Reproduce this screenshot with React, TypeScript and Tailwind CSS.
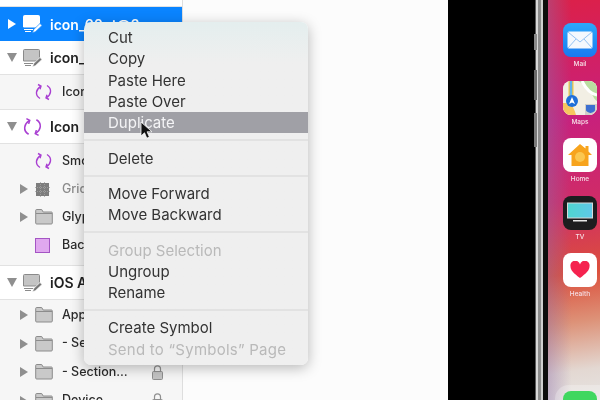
import React from 'react';

const FONT = "font-['Inter','Liberation_Sans',sans-serif]";

// Artboard icon with the small pencil
function ArtboardIcon({ light }: { light?: boolean }) {
  const fill = light ? '#ffffff' : '#c4c4c4';
  const stroke = light ? '#ffffff' : '#8a8a8a';
  return (
    <svg width="20" height="20" viewBox="0 0 20 20" className="shrink-0">
      <path d="M1.500 1.500h14a1 1 0 0 1 1 1V13H.500V2.500a1 1 0 0 1 1-1z" fill={fill} stroke={stroke} />
      <path d="M1 15.500h9M2 17.500h6" stroke={stroke} strokeWidth="1" fill="none" />
      <path d="M9.500 19l1.200-3.500 6.300-6 2 2-6.300 6z" fill={light ? '#ffffff' : '#777777'} stroke={light ? '#1a8cff' : '#ffffff'} strokeWidth="0.700" />
    </svg>
  );
}

function SyncIcon({ size = 17 }: { size?: number }) {
  return (
    <svg width={size} height={size + 1} viewBox="0 0 17 18" fill="none" stroke="#a93fd2" strokeWidth="1.400" className="shrink-0">
      <path d="M5 15.500C2.500 14 1.200 11.800 1.500 9.200 1.800 6.800 3 5 5.500 3.300" />
      <path d="M3 1.500l3 1.500-1 3.200" />
      <path d="M12 2.500c2.500 1.500 3.800 3.700 3.500 6.300-.3 2.400-1.500 4.200-4 5.900" />
      <path d="M14 16.500l-3-1.500 1-3.200" />
    </svg>
  );
}

function FolderIcon() {
  return (
    <svg width="18" height="16" viewBox="0 0 18 16" className="shrink-0">
      <path d="M.700 3V1.500a1 1 0 0 1 1-1h5l1.500 2.500h8.300a1 1 0 0 1 .8 1V14a1 1 0 0 1-1 1H1.700a1 1 0 0 1-1-1z" fill="#c9c9c9" stroke="#8c8c8c" />
      <path d="M1 4.500h16" stroke="#8c8c8c" />
    </svg>
  );
}

function GridIcon() {
  return (
    <svg width="15" height="15" viewBox="0 0 15 15" className="shrink-0">
      <rect x="1" y="1" width="13" height="13" fill="#7d7d7d" />
      <path d="M5.500 0v15M9.500 0v15M0 5.500h15M0 9.500h15" stroke="#a5a5a5" strokeWidth="0.800" strokeDasharray="1 1" />
    </svg>
  );
}

function Lock() {
  return (
    <svg width="11" height="15" viewBox="0 0 11 15" className="shrink-0">
      <path d="M2.500 6.500V3.800a3 3 0 0 1 6 0v2.700" fill="none" stroke="#8f8f8f" strokeWidth="1.200" />
      <rect x="0.500" y="6.500" width="10" height="8" rx="1" fill="#c4c4c4" stroke="#8f8f8f" />
    </svg>
  );
}

function Caret({ open, white }: { open?: boolean; white?: boolean }) {
  const color = white ? 'border-l-white' : 'border-l-[#8f8f8f]';
  if (open) {
    return <div className="w-0 h-0 border-x-[5px] border-x-transparent border-t-[9px] border-t-[#8f8f8f]" />;
  }
  return <div className={`w-0 h-0 border-y-[5px] border-y-transparent border-l-[8px] ${color}`} />;
}

function Header({ icon, name, open = true }: { icon: React.ReactNode; name: string; open?: boolean }) {
  return (
    <div className="h-[34px] flex items-center pl-[7px] bg-white border-b border-[#e2e2e2]">
      <div className="w-[16px] flex justify-start">
        <Caret open={open} />
      </div>
      <div className="w-[27px] flex justify-start">{icon}</div>
      <span className="text-[14px] font-semibold text-[#222] whitespace-nowrap">{name}</span>
    </div>
  );
}

function Child({
  icon,
  name,
  caret,
  dim,
  lock,
  h = 'h-[28px]',
}: {
  icon: React.ReactNode;
  name: string;
  caret?: boolean;
  dim?: boolean;
  lock?: boolean;
  h?: string;
}) {
  return (
    <div className={`${h} flex items-center pl-[20px] pr-[19px]`}>
      <div className="w-[15px]">{caret && <Caret />}</div>
      <div className="w-[27px] flex justify-start">{icon}</div>
      <span className={`flex-1 text-[12.500px] font-medium whitespace-nowrap ${dim ? 'text-[#8b8b8b]' : 'text-[#2b2b2b]'}`}>{name}</span>
      {lock && <Lock />}
    </div>
  );
}

function Sidebar() {
  return (
    <div className="w-[183px] shrink-0 h-full border-r border-[#dedede] bg-[#f6f6f6] overflow-hidden">
      <div className="h-[7px] bg-white border-b border-[#e2e2e2]" />
      <div className="h-[34px] flex items-center pl-[8px] bg-[#0a84ff]">
        <div className="w-[15px]">
          <Caret white />
        </div>
        <div className="w-[27px] flex justify-start">
          <ArtboardIcon light />
        </div>
        <span className="text-[14px] font-semibold text-white whitespace-nowrap">icon_60pt@2x</span>
      </div>
      <Header icon={<ArtboardIcon />} name="icon_60pt" />
      <div className="border-b border-[#e2e2e2]">
        <Child icon={<SyncIcon />} name="Icon" h="h-[34px]" />
      </div>
      <Header icon={<SyncIcon size={19} />} name="Icon" />
      <div className="pt-[3px] pb-[6px] border-b border-[#e2e2e2]">
        <Child icon={<SyncIcon />} name="Smooth" />
        <Child caret icon={<GridIcon />} name="Grid" dim />
        <Child caret icon={<FolderIcon />} name="Glyphs" />
        <Child icon={<div className="w-[15px] h-[15px] bg-[#e0a8ef] border border-[#a455c4]" />} name="Background" />
      </div>
      <Header icon={<ArtboardIcon />} name="iOS App" />
      <div className="pt-[1px]">
        <Child caret icon={<FolderIcon />} name="App" h="h-[28.500px]" />
        <Child caret icon={<FolderIcon />} name="- Section" h="h-[28.500px]" />
        <Child caret icon={<FolderIcon />} name="- Section…" lock h="h-[28.500px]" />
        <Child caret icon={<FolderIcon />} name="Device" lock h="h-[28.500px]" />
      </div>
    </div>
  );
}

function Sep() {
  return (
    <div className="h-[14px] flex items-center">
      <div className="w-full h-[2px] bg-[#e2e2e2]" />
    </div>
  );
}

function Item({ label, disabled, active, wide }: { label: string; disabled?: boolean; active?: boolean; wide?: boolean }) {
  const color = disabled ? 'text-[#b9b9b9]' : active ? 'text-[#f4f4f6] bg-[#a0a0a6]' : 'text-[#333]';
  return (
    <div className={`h-[21.300px] flex items-center pl-[24px] text-[15px] leading-none whitespace-nowrap ${wide ? 'tracking-[0.24px]' : ''} ${color}`}>
      {label}
    </div>
  );
}

function ContextMenu() {
  return (
    <div className="absolute left-[84px] top-[22px] w-[224px] py-[5px] rounded-[7px] bg-gradient-to-b from-[#e4eeee] to-[#efefef] to-[12%] shadow-[0_3px_14px_rgba(0,0,0,0.28)]">
      <Item label="Cut" />
      <Item label="Copy" />
      <Item label="Paste Here" />
      <Item label="Paste Over" />
      <Item label="Duplicate" active />
      <Sep />
      <Item label="Delete" />
      <Sep />
      <Item label="Move Forward" />
      <Item label="Move Backward" />
      <Sep />
      <Item label="Group Selection" disabled />
      <Item label="Ungroup" />
      <Item label="Rename" />
      <Sep />
      <Item label="Create Symbol" />
      <Item label="Send to “Symbols” Page" disabled wide />
    </div>
  );
}

function Cursor() {
  return (
    <svg width="13" height="19" viewBox="0 0 13 19" className="absolute left-[140px] top-[121px]">
      <path d="M1 1v14l3.500-3.200 2.300 5.400 2.600-1.100-2.300-5.300H12z" fill="#111" stroke="#fff" strokeWidth="0.800" />
    </svg>
  );
}

function AppIcon({ label, className, children }: { label: string; className: string; children: React.ReactNode }) {
  return (
    <div className="flex flex-col items-center h-[57.500px]">
      <div className={`w-[34px] h-[34px] rounded-[8px] overflow-hidden flex items-center justify-center shrink-0 ${className}`}>{children}</div>
      <span className="mt-[3px] text-[6.500px] leading-[9px] font-medium text-[#f6dfe6]">{label}</span>
    </div>
  );
}

function Phone() {
  return (
    <div className="w-[152px] shrink-0 h-full bg-black flex justify-end relative">
      <div className="w-[13px] h-full flex">
        <div className="w-[1px] bg-[#5a5a5a]" />
        <div className="w-[2px] bg-[#d8d8d8]" />
        <div className="w-[3px] bg-[#8c8c8c]" />
        <div className="w-[2px] bg-[#d0d0d0]" />
        <div className="w-[5px] bg-[#0c0c0c]" />
      </div>
      <div className="w-[52px] h-full overflow-hidden pl-[15px] pt-[23px] bg-[linear-gradient(90deg,rgba(140,110,170,0.4),rgba(140,110,170,0)_45%),linear-gradient(172deg,#dc2049_0%,#c8207c_30%,#cf2b68_50%,#dc4f3c_68%,#dd9278_80%,#e3d8d2_92%,#e6e4e2_100%)]">
        <div className="w-[34px] flex flex-col">
          <AppIcon label="Mail" className="bg-gradient-to-b from-[#2ea8fb] to-[#1a78f0]">
            <svg width="26" height="18" viewBox="0 0 26 18">
              <rect x="0.500" y="0.500" width="25" height="17" rx="1.500" fill="#f4f8fd" />
              <path d="M1 1l12 10L25 1M1 17l8-9M25 17l-8-9" fill="none" stroke="#7ab4f0" strokeWidth="0.800" />
            </svg>
          </AppIcon>
          <AppIcon label="Maps" className="bg-[#f2efe6]">
            <svg width="34" height="34" viewBox="0 0 34 34">
              <rect width="34" height="34" fill="#f2efe4" />
              <path d="M15 0C28 6 30 18 34 20V0z" fill="#b9dda0" />
              <path d="M19 0c4 8 9 13 15 14" fill="none" stroke="#fff" strokeWidth="3" />
              <path d="M0 22c8 0 10 2 13 12H0z" fill="#f7c55f" />
              <path d="M8 0v17" stroke="#f5c53f" strokeWidth="5" />
              <path d="M8 0v17" stroke="#5fb3ee" strokeWidth="2.500" />
              <rect x="22" y="23" width="12" height="11" fill="#d0cfc8" />
              <circle cx="9" cy="20" r="6" fill="#1f6fd8" />
              <path d="M9 16l3 7-3-1.500-3 1.500z" fill="#fff" />
              <path d="M23 24h9v5c0 2-4 3-4.500 3S23 31 23 29z" fill="#3d6fd0" />
            </svg>
          </AppIcon>
          <AppIcon label="Home" className="bg-white">
            <svg width="26" height="24" viewBox="0 0 26 24">
              <path d="M13 1L1 12h3.500v11h17V12H25l-3.500-3.500V3h-3v2.500z" fill="#f7a41d" />
              <circle cx="13" cy="14" r="5" fill="#fbcf5c" opacity="0.800" />
            </svg>
          </AppIcon>
          <AppIcon label="TV" className="bg-[#1d1d1f]">
            <svg width="26" height="22" viewBox="0 0 26 22">
              <defs>
                <linearGradient id="tvScreen" x1="0" y1="0" x2="1" y2="0">
                  <stop offset="0" stopColor="#4fd6d0" />
                  <stop offset="1" stopColor="#5fc8e8" />
                </linearGradient>
              </defs>
              <rect x="0.500" y="1" width="25" height="15" fill="url(#tvScreen)" stroke="#d8d8d8" />
              <rect x="6" y="18" width="14" height="1.500" fill="#e8e8e8" />
            </svg>
          </AppIcon>
          <AppIcon label="Health" className="bg-white">
            <svg width="20" height="18" viewBox="0 0 20 18">
              <path d="M10 17C4 12.500 .500 9.500.500 5.500A4.800 4.800 0 0 1 10 3.500a4.800 4.800 0 0 1 9.500 2c0 4-3.500 7-9.500 11.500z" fill="#f5234f" />
            </svg>
          </AppIcon>
        </div>
        {/* dock */}
        <div className="mt-[74px] -ml-[8px] w-[60px] h-[60px] rounded-[14px] bg-white/25 pt-[6px] pl-[8px]">
          <div className="w-[34px] h-[34px] rounded-[8px] bg-[#3fd75f]" />
        </div>
      </div>
      <div className="absolute left-[86px] top-[34px] w-[3px] h-[16px] bg-[#8a8a8a]" />
      <div className="absolute left-[86px] top-[70px] w-[3px] h-[30px] bg-[#6a6a6a]" />
      <div className="absolute left-[86px] top-[113px] w-[3px] h-[34px] bg-[#7a7a7a]" />
    </div>
  );
}

export default function App() {
  return (
    <div className={`relative w-[600px] h-[400px] overflow-hidden flex bg-white blur-[0.3px] ${FONT}`}>
      <Sidebar />
      <div className="flex-1 h-full bg-[#fcfcfc]" />
      <Phone />
      <ContextMenu />
      <Cursor />
    </div>
  );
}
